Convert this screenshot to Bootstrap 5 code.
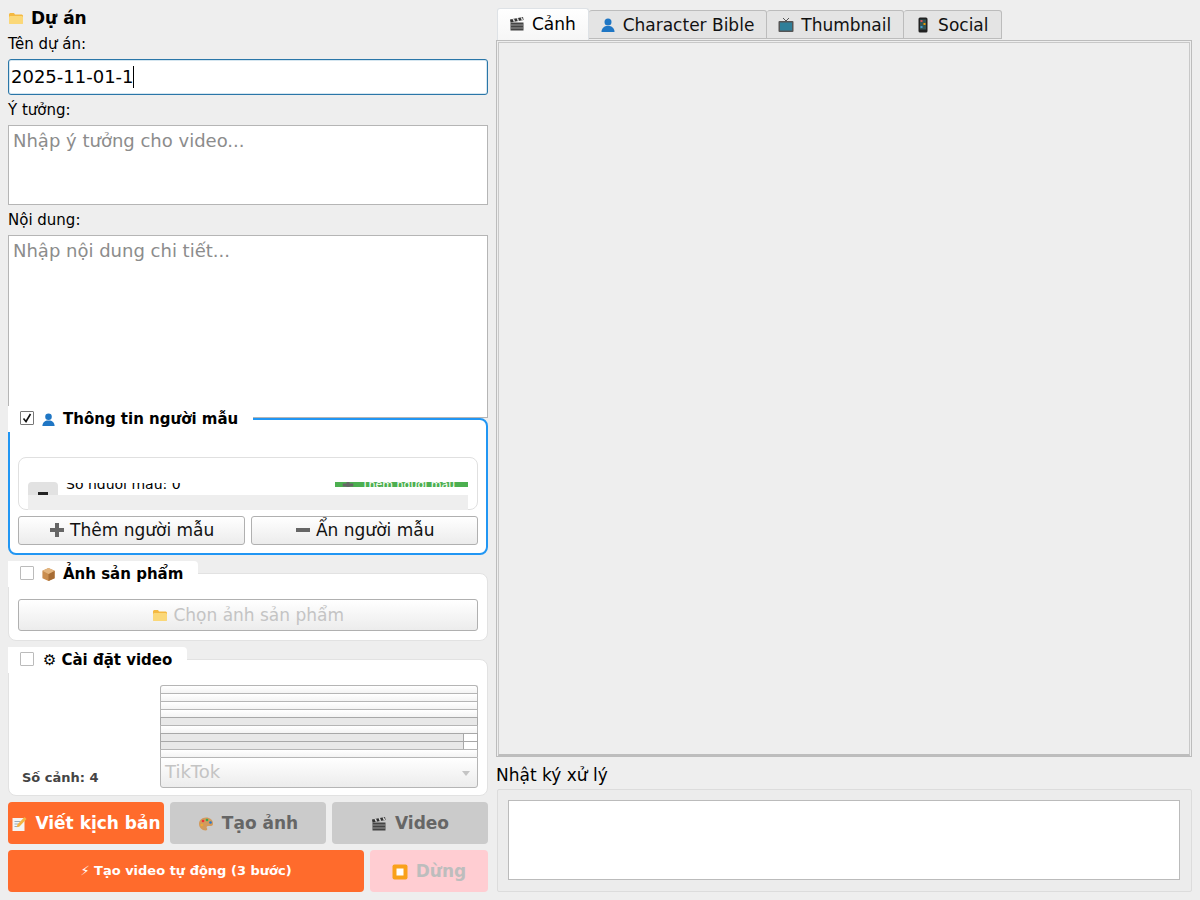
<!DOCTYPE html>
<html lang="vi">
  <head>
    <meta charset="UTF-8" />
    <title>Tạo video</title>
    <link href="https://cdn.jsdelivr.net/npm/bootstrap@5.3.0/dist/css/bootstrap.min.css" rel="stylesheet" />
    <style>
      html, body { height: 900px; overflow: hidden; }
      body { background: #eee; color: #000; font-family: "DejaVu Sans", sans-serif; font-size: 14px; }
      .app-wrap { padding: 8px; gap: 8px; height: 900px; }
      .left-col { width: 480px; flex: none; }
      .right-col { width: 696px; flex: none; }
      .ico { display: inline-block; flex: none; vertical-align: -2px; width: 16px; height: 16px; }

      .sec-title { height: 20px; line-height: 20px; font-size: 17px; font-weight: 700; gap: 7px; }
      .fld-lbl { height: 20px; line-height: 20px; margin: 5px 0; font-size: 15px; }
      .sec-title + .fld-lbl { margin-top: 6px; }
      .name-wrap { height: 36px; }
      .name-input.form-control { height: 36px; padding: 0 2px 2px; font-size: 18px; color: #000; border: 1px solid #2a76a8; border-radius: 3px; box-shadow: inset 0 0 0 1px #d5e6f0; }
      .fake-caret { position: absolute; left: 125px; top: 7px; width: 1px; height: 22px; background: #000; }
      .txt-area.form-control { display: block; resize: none; padding: 4px; font-size: 18px; line-height: 22px; border: 1px solid #b5b5b5; border-radius: 0; }
      .txt-area.form-control::placeholder { color: #8c8c8c; opacity: 1; }
      .idea-area { height: 80px; }
      .content-area { height: 183px; }

      .grp { position: relative; background: #fff; border: 1px solid #e2e2e2; border-radius: 8px; padding: 0 9px; }
      .grp-model { height: 137px; border: 2px solid #2196f3; padding: 37px 8px 0; }
      .grp-product { height: 68px; margin-top: 18px; padding-top: 25px; }
      .grp-video { height: 137px; margin-top: 18px; padding: 25px 9px 7px 13px; }
      .grp-tab { position: absolute; left: -1px; top: -13px; height: 26px; padding-left: 12px; background: #fff; border-radius: 0 4px 0 0; font-size: 15px; font-weight: 700; display: flex; align-items: center; gap: 7px; white-space: nowrap; }
      .grp-tab .ico { width: 15px; height: 15px; }
      .grp-model .grp-tab { left: -2px; top: -14px; padding-right: 15px; width: 245px; }
      .grp-product .grp-tab { width: 190px; }
      .grp-video .grp-tab { width: 179px; gap: 5px; }
      .gear-mark { margin-left: 4px; }
      .tick-box { width: 14px; height: 14px; flex: none; margin-bottom: 2px; background: #fff; border: 1px solid #bbb; border-radius: 1px; display: flex; align-items: center; justify-content: center; }
      .tick-on { border-color: #777; }

      .clip-frame { height: 53px; border: 1px solid #e0e0e0; border-radius: 8px; padding: 24px 9px 0; }
      .clip-row { height: 13px; }
      .clip-toggle { width: 30px; height: 13px; background: #e2e2e2; border-radius: 4px 4px 0 0; display: flex; justify-content: center; align-items: flex-end; }
      .clip-toggle i { display: block; width: 10px; height: 3px; background: #222; }
      .clip-count { margin: 1px 0 0 8px; height: 6px; overflow: hidden; font-size: 14px; line-height: 14px; display: flex; align-items: flex-end; }
      .clip-count span { display: block; margin-bottom: -2px; }
      .clip-add { margin-left: auto; width: 133px; height: 5px; overflow: hidden; background: #4caf50; color: #fff; font-size: 11px; line-height: 5px; white-space: nowrap; display: flex; align-items: center; justify-content: center; gap: 8px; padding-right: 6px; }
      .clip-add .ico { width: 12px; height: 12px; }
      .clip-bar { height: 15px; background: #eee; margin-bottom: -1px; position: relative; }

      .model-row { gap: 6px; margin-top: 6px; }
      .soft-btn.btn { background: linear-gradient(#fff, #ececec); border: 1px solid #b0b0b0; border-radius: 3px; color: #111; font-size: 17px; line-height: 1; padding: 0; }
      .model-btn.btn { height: 29px; flex: 1 1 0; }
      .pick-btn.btn { height: 32px; width: 100%; opacity: 1; color: #c4c4c4; }

      .rows-col { width: 318px; margin-left: auto; }
      .thin-row { height: 8px; border: 1px solid #b5b5b5; border-bottom: 0; background: linear-gradient(#fff, #f4f4f4); display: flex; }
      .thin-row:first-child { border-radius: 3px 3px 0 0; }
      .thin-grey { background: #e8e8e8; border-color: #a8a8a8; }
      .thin-grey b { flex: 1; }
      .thin-grey u { width: 14px; background: #fff; border-left: 1px solid #a8a8a8; }
      .combo-box { height: 31px; border: 1px solid #b5b5b5; border-radius: 0 0 3px 3px; background: linear-gradient(#fff, #ececec); color: #c4c4c4; font-size: 18px; padding: 0 4px 2px; }
      .combo-arrow { width: 0; height: 0; margin: 4px 3px 0 0; border: 4px solid transparent; border-top: 5px solid #c4c4c4; border-bottom: 0; }
      .scene-count { font-size: 13px; font-weight: 700; color: #444; line-height: 16px; margin-bottom: 2px; white-space: nowrap; }

      .act-row { gap: 6px; margin-top: 6px; }
      .act-btn.btn { height: 42px; border: 0; border-radius: 4px; font-size: 17px; font-weight: 700; padding: 2px 0 0; white-space: nowrap; opacity: 1; display: flex; align-items: center; justify-content: center; gap: 8px; }
      .act-third { flex: 1 1 0; }
      .act-orange.btn { background: #ff6b2c; color: #fff; }
      .act-grey.btn { background: #cbcbcb; color: #666; }
      .act-auto.btn { width: 356px; font-size: 13px; gap: 4px; padding: 0; }
      .act-stop.btn { width: 118px; background: #ffcdd2; color: #bdbdbd; }

      .tab-strip.nav-tabs { height: 32px; border: 0; align-items: flex-end; margin-left: 1px; }
      .tab-strip .nav-link { height: 29px; margin: 0 0 1px; padding: 0 12px 0 11px; border: 1px solid #bcbcbc; border-bottom: 1px solid #bcbcbc; border-left-width: 0; border-radius: 3px 3px 0 0; background: #e4e4e4; color: #111; font-size: 17px; line-height: 29px; white-space: nowrap; }
      .tab-strip .nav-link .ico { margin-right: 1.500px; }
      .tab-strip .nav-link.active { height: 32px; margin-bottom: 0; border-left-width: 1px; border-bottom: 0; background: linear-gradient(#fff, #f6f6f6); color: #000; line-height: 30px; }
      .tab-pane-box { height: 717px; border: 1px solid #bcbcbc; padding: 1px 1px 0; }
      .tab-pane-in { height: 100%; border: 1px solid #c8c8c8; border-bottom: 2px solid #bdbdbd; }
      .log-title { font-size: 17px; height: 32px; line-height: 36px; }
      .log-box { height: 103px; margin-left: 1px; background: #ececec; border: 1px solid #dcdcdc; border-radius: 2px; padding: 10px 11px 10px 10px; }
      .log-in { height: 80px; background: #fff; border: 1px solid #bbb; }
    </style>
  </head>
  <body>
    <svg width="0" height="0" class="position-absolute">
      <symbol id="i-folder" viewBox="0 0 16 16"><path fill="#f4b942" d="M1 4l1-1h4l1 1.500h7l1 1V13l-1 1H2l-1-1z"/><path fill="#fbd878" d="M1 7l1-1h12l1 1v6l-1 1H2l-1-1z"/></symbol>
      <symbol id="i-person" viewBox="0 0 16 16"><circle cx="8" cy="5" r="3.500" fill="#1f76c4"/><path fill="#1f76c4" d="M1.500 15c0-4 3-5.500 4.500-6h4c1.500.5 4.500 2 4.500 6z"/></symbol>
      <symbol id="i-box" viewBox="0 0 16 16"><path fill="#c98d4f" d="M8 1l6.500 3v8L8 15 1.500 12V4z"/><path fill="#a66c34" d="M8 7.500l6.500-3.500v8L8 15z"/><path fill="#e3b57f" d="M8 1l6.500 3L8 7.500 1.500 4z"/></symbol>
      <symbol id="i-clap" viewBox="0 0 16 16"><rect x="1.500" y="6.500" width="13" height="8" fill="#444"/><path fill="#333" d="M1 3.500l13-2.500.6 3L1.500 6.500z"/><path fill="#ddd" d="M3.500 3l1.500-.3 1.200 2.700-1.500.3zM7.500 2.300l1.500-.3 1.200 2.700-1.500.3zM11.500 1.500l1.500-.3 1.200 2.700-1.500.3z"/><path stroke="#999" d="M1.500 9h13M1.500 12h13"/></symbol>
      <symbol id="i-tv" viewBox="0 0 16 16"><path stroke="#555" d="M5 1l3 3 3-3" fill="none"/><rect x=".5" y="4" width="15" height="11" rx="1" fill="#555"/><rect x="2" y="5.500" width="12" height="8" fill="#2f7f99"/></symbol>
      <symbol id="i-phone" viewBox="0 0 16 16"><rect x="3.500" y="0.500" width="9" height="15" rx="1.500" fill="#222"/><rect x="5" y="2.500" width="6" height="10" fill="#355"/><rect x="5.500" y="3" width="2" height="2" fill="#d55"/><rect x="8.500" y="6" width="2" height="2" fill="#e90"/><rect x="5.500" y="9" width="2" height="2" fill="#49c"/></symbol>
      <symbol id="i-memo" viewBox="0 0 16 16"><rect x="1.500" y="2" width="12" height="13" fill="#f4f4f4"/><path stroke="#9ab" d="M3.500 5.500h6M3.500 8h6M3.500 10.500h4"/><path fill="#f5b342" d="M13.500 1l2 2-7 7.500-2.800.8.800-2.800z"/></symbol>
      <symbol id="i-palette" viewBox="0 0 16 16"><path fill="#d29a5c" d="M8 1.500C3.500 1.500 1 4.500 1 8s3 6.500 6.500 6.500c2 0 2-1.500 1.300-2.500-.6-1 0-2 1.200-2H13c1.500 0 2-1 2-2.500 0-3.500-3-6-7-6z"/><circle cx="5" cy="5" r="1.300" fill="#e33"/><circle cx="9" cy="4" r="1.300" fill="#3a5"/><circle cx="12.500" cy="6.500" r="1.300" fill="#27c"/><circle cx="3.800" cy="9" r="1.300" fill="#ea3"/></symbol>
      <symbol id="i-stop" viewBox="0 0 16 16"><rect x="0.500" y="0.500" width="15" height="15" rx="2" fill="#f9a11b"/><rect x="4.500" y="4.500" width="7" height="7" fill="#fff"/></symbol>
      <symbol id="i-plus" viewBox="0 0 16 16"><path fill="#666" d="M6 1h4v5h5v4h-5v5H6v-5H1V6h5z"/></symbol>
      <symbol id="i-minus" viewBox="0 0 16 16"><rect x="1" y="6" width="14" height="4" fill="#666"/></symbol>
    </svg>

    <div class="app-wrap d-flex">
      <div class="left-col">
        <div class="sec-title d-flex align-items-center">
          <svg class="ico"><use href="#i-folder" /></svg>
          <span>Dự án</span>
        </div>
        <label class="fld-lbl d-block" for="tenDuAn">Tên dự án:</label>
        <div class="name-wrap position-relative">
          <input id="tenDuAn" type="text" class="form-control name-input" value="2025-11-01-1" />
          <span class="fake-caret"></span>
        </div>
        <label class="fld-lbl d-block" for="yTuong">Ý tưởng:</label>
        <textarea id="yTuong" class="form-control txt-area idea-area" placeholder="Nhập ý tưởng cho video..."></textarea>
        <label class="fld-lbl d-block" for="noiDung">Nội dung:</label>
        <textarea id="noiDung" class="form-control txt-area content-area" placeholder="Nhập nội dung chi tiết..."></textarea>

        <div class="grp grp-model">
          <div class="grp-tab">
            <span class="tick-box tick-on">
              <svg width="10" height="10" viewBox="0 0 10 10"><path d="M1.500 5.500l2.500 3L8.500 1" fill="none" stroke="#111" stroke-width="1.600" /></svg>
            </span>
            <svg class="ico"><use href="#i-person" /></svg>
            <span>Thông tin người mẫu</span>
          </div>
          <div class="clip-frame">
            <div class="clip-row d-flex">
              <div class="clip-toggle"><i></i></div>
              <div class="clip-count"><span>Số người mẫu: 0</span></div>
              <div class="clip-add"><svg class="ico"><use href="#i-plus" /></svg><span>Thêm người mẫu</span></div>
            </div>
            <div class="clip-bar"></div>
          </div>
          <div class="d-flex model-row">
            <button type="button" class="btn soft-btn model-btn"><svg class="ico"><use href="#i-plus" /></svg> Thêm người mẫu</button>
            <button type="button" class="btn soft-btn model-btn"><svg class="ico"><use href="#i-minus" /></svg> Ẩn người mẫu</button>
          </div>
        </div>

        <div class="grp grp-product">
          <div class="grp-tab">
            <span class="tick-box"></span>
            <svg class="ico"><use href="#i-box" /></svg>
            <span>Ảnh sản phẩm</span>
          </div>
          <button type="button" class="btn soft-btn pick-btn" disabled><svg class="ico"><use href="#i-folder" /></svg> Chọn ảnh sản phẩm</button>
        </div>

        <div class="grp grp-video d-flex">
          <div class="grp-tab">
            <span class="tick-box"></span>
            <span class="gear-mark">⚙</span>
            <span>Cài đặt video</span>
          </div>
          <div class="scene-count align-self-end">Số cảnh: 4</div>
          <div class="rows-col">
            <div class="thin-row"></div>
            <div class="thin-row"></div>
            <div class="thin-row"></div>
            <div class="thin-row"></div>
            <div class="thin-row thin-grey"></div>
            <div class="thin-row"></div>
            <div class="thin-row thin-grey"><b></b><u></u></div>
            <div class="thin-row thin-grey"><b></b><u></u></div>
            <div class="thin-row"></div>
            <div class="combo-box d-flex align-items-center justify-content-between">
              <span>TikTok</span>
              <span class="combo-arrow"></span>
            </div>
          </div>
        </div>

        <div class="act-row d-flex">
          <button type="button" class="btn act-btn act-third act-orange"><svg class="ico"><use href="#i-memo" /></svg>Viết kịch bản</button>
          <button type="button" class="btn act-btn act-third act-grey"><svg class="ico"><use href="#i-palette" /></svg>Tạo ảnh</button>
          <button type="button" class="btn act-btn act-third act-grey"><svg class="ico"><use href="#i-clap" /></svg>Video</button>
        </div>
        <div class="act-row d-flex">
          <button type="button" class="btn act-btn act-auto act-orange">⚡ Tạo video tự động (3 bước)</button>
          <button type="button" class="btn act-btn act-stop"><svg class="ico"><use href="#i-stop" /></svg>Dừng</button>
        </div>
      </div>

      <div class="right-col">
        <ul class="nav nav-tabs tab-strip">
          <li class="nav-item"><a class="nav-link active" href="#"><svg class="ico"><use href="#i-clap" /></svg> Cảnh</a></li>
          <li class="nav-item"><a class="nav-link" href="#"><svg class="ico"><use href="#i-person" /></svg> Character Bible</a></li>
          <li class="nav-item"><a class="nav-link" href="#"><svg class="ico"><use href="#i-tv" /></svg> Thumbnail</a></li>
          <li class="nav-item"><a class="nav-link" href="#"><svg class="ico"><use href="#i-phone" /></svg> Social</a></li>
        </ul>
        <div class="tab-pane-box"><div class="tab-pane-in"></div></div>
        <div class="log-title">Nhật ký xử lý</div>
        <div class="log-box"><div class="log-in"></div></div>
      </div>
    </div>

    <script src="https://cdn.jsdelivr.net/npm/bootstrap@5.3.0/dist/js/bootstrap.bundle.min.js"></script>
  </body>
</html>
